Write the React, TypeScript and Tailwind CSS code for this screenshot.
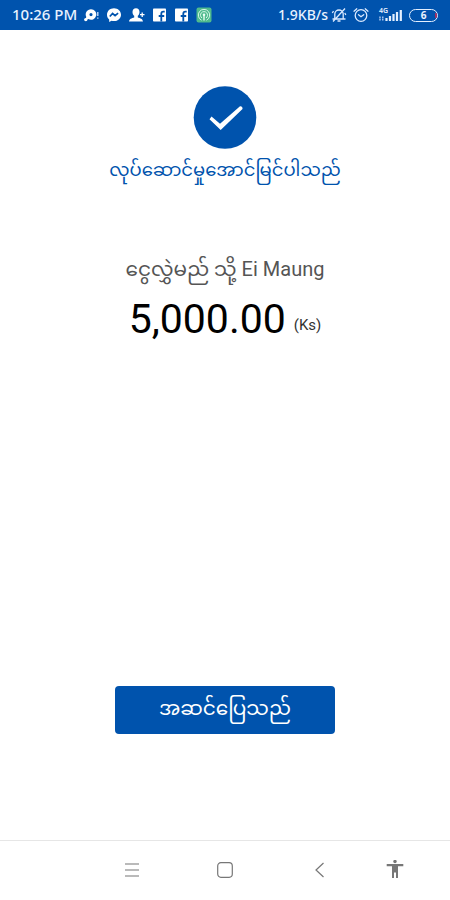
import type { ReactNode } from "react";

function StatusBar() {
  return (
    <header className="flex h-[30px] items-center justify-between bg-[#0053ad] px-3 font-['Noto_Sans',sans-serif] text-sm font-medium text-[#e8f2ff]">
      <div className="flex items-center">
        <span className="w-[71px] text-[15px] whitespace-nowrap">10:26 PM</span>
        <div className="flex items-center gap-[7px]">
          <ChatDotIcon />
          <MessengerIcon />
          <AddPersonIcon />
          <FacebookIcon />
          <FacebookIcon />
          <HotspotIcon />
        </div>
      </div>
      <div className="flex items-center">
        <span className="whitespace-nowrap">1.9KB/s</span>
        <MutedBellIcon />
        <AlarmIcon />
        <SignalIcon />
        <Battery level={6} />
      </div>
    </header>
  );
}

function ChatDotIcon() {
  return (
    <svg className="h-4 w-4" viewBox="0 0 16 16" aria-hidden="true">
      <path
        fill="#fff"
        fillRule="evenodd"
        d="M8 2.200a5.300 5.300 0 1 1-2.600 9.900l-3 .6.900-2.700A5.300 5.300 0 0 1 8 2.200ZM8 6a1.600 1.600 0 1 0 0 3.200A1.600 1.600 0 0 0 8 6Z"
      />
      <circle cx="2.800" cy="12.600" r="1.700" fill="#fff" />
      <path d="M14.800 5v4M14.800 10.400v1.400" stroke="#cfe2ff" strokeWidth="1.300" />
    </svg>
  );
}

function MessengerIcon() {
  return (
    <svg className="h-4 w-4" viewBox="0 0 16 16" aria-hidden="true">
      <path
        fill="#fff"
        d="M8 1.200c-4 0-7 2.800-7 6.500 0 2 .8 3.600 2.200 4.800v2.500l2.300-1.200c.8.200 1.600.3 2.500.3 4 0 7-2.800 7-6.400S12 1.200 8 1.200Z"
      />
      <path d="m3.800 9.500 2.800-3 2.500 2.200 3-2.500" fill="none" stroke="#0053ad" strokeWidth="1.700" />
    </svg>
  );
}

function AddPersonIcon() {
  return (
    <svg className="h-4 w-4" viewBox="0 0 16 16" aria-hidden="true">
      <path
        fill="#fff"
        d="M7 1.200c2.200 0 3.500 1.500 3.500 3.700 0 1.700-.7 3-1.700 3.900v1.600c2.500.7 5 1.500 5.200 4.200H0c.2-2.700 2.700-3.500 5.200-4.200V8.800c-1-.9-1.700-2.200-1.700-3.900 0-2.200 1.300-3.700 3.500-3.700Z"
      />
      <path d="M11 7.700h4.500M13.200 5.500V10" stroke="#fff" strokeWidth="1.300" />
    </svg>
  );
}

function FacebookIcon() {
  return (
    <svg className="h-4 w-[15px]" viewBox="0 0 15 16" aria-hidden="true">
      <rect x="1" y="1.500" width="13" height="13" rx=".8" fill="#fff" />
      <path
        d="M9.300 14.500V6.800c0-1.500.7-2.200 2-2.200h1.400M6.700 9h5.500"
        fill="none"
        stroke="#0053ad"
        strokeWidth="1.800"
      />
    </svg>
  );
}

function HotspotIcon() {
  return (
    <svg className="h-4 w-4" viewBox="0 0 16 16" aria-hidden="true">
      <rect x=".5" y=".5" width="15" height="15" rx="2" fill="#4fba8d" />
      <g fill="none" stroke="#d8f8e8">
        <path d="M5.500 13.200a5.700 5.700 0 1 1 5 0" />
        <path d="M6 11a3.500 3.500 0 1 1 4 0" />
        <path d="M8 8v5.500" strokeWidth="1.500" />
      </g>
      <circle cx="8" cy="7.700" r="1.300" fill="#e8fff4" />
    </svg>
  );
}

function MutedBellIcon() {
  return (
    <svg className="ml-[3px] h-4 w-4" viewBox="0 0 16 16" aria-hidden="true">
      <g fill="none" stroke="#dbeaff" strokeWidth="1.300">
        <path d="M3.800 11.500V7c0-2.300 1.900-4 4.200-4s4.200 1.700 4.200 4v4.500M1.500 12h13M6.500 14h3M14 1.500 2 14.500" />
        <path d="M2.500 4 1.300 6M13.800 6l1 2" />
      </g>
    </svg>
  );
}

function AlarmIcon() {
  return (
    <svg className="ml-1.5 h-4 w-4" viewBox="0 0 16 16" aria-hidden="true">
      <g fill="none" stroke="#dbeaff" strokeWidth="1.300" strokeLinecap="round">
        <circle cx="8" cy="8.500" r="5.800" />
        <path d="M1 4.200 3.800 1.800M15 4.200l-2.800-2.400M5.500 7.700 8 9.700l2.700-2" />
      </g>
    </svg>
  );
}

function SignalIcon() {
  return (
    <div className="relative ml-2.5 h-4 w-6">
      <span className="absolute top-0 left-0 text-[7px] leading-[7px] font-semibold">4G</span>
      <svg className="h-4 w-6" viewBox="0 0 24 16" aria-hidden="true">
        <path
          d="M1 9.500v4M3.800 9.500v4"
          stroke="#cfe2ff"
          strokeWidth="1.200"
          strokeDasharray="2 .6"
        />
        <path
          d="M7.500 14v-3M11 14V9M14.500 14V7M18 14V5M21.800 14V3"
          stroke="#e3efff"
          strokeWidth="2.200"
        />
      </svg>
    </div>
  );
}

function Battery({ level }: { level: number }) {
  return (
    <div className="relative ml-1.5 flex h-[13px] w-[29px] items-center justify-center overflow-hidden rounded-full border border-[#e3efff] text-[10px] leading-none font-bold">
      <span className="absolute top-[3px] right-0 h-[5px] w-0.5 bg-[#a52f62]" />
      {level}
    </div>
  );
}

function NavButton({ label, children }: { label: string; children: ReactNode }) {
  return (
    <button type="button" aria-label={label} className="flex h-10 items-center justify-center">
      <svg
        className="h-5 w-5"
        viewBox="0 0 20 20"
        fill="none"
        stroke="#777"
        strokeWidth="1.200"
        aria-hidden="true"
      >
        {children}
      </svg>
    </button>
  );
}

function NavigationBar() {
  return (
    <nav className="grid h-[60px] grid-cols-[85fr_93fr_94fr_94fr_57fr_27fr] items-center border-t border-[#e6e6e6] pb-0.5">
      <span />
      <NavButton label="Recent apps">
        <path d="M3 4h14M3 10h14M3 16h14" />
      </NavButton>
      <NavButton label="Home">
        <rect x="2.700" y="2.700" width="14.600" height="14.600" rx="3.200" />
      </NavButton>
      <NavButton label="Back">
        <path d="m14.500 3-7.500 7 7.500 7" />
      </NavButton>
      <NavButton label="Accessibility">
        <circle cx="10" cy="1.500" r="1.700" fill="#777" stroke="none" />
        <path fill="#777" stroke="none" d="M1.700 4h16.600v2.200H13V18h-2v-5.500H9V18H7V6.200H1.700Z" />
      </NavButton>
    </nav>
  );
}

export default function App() {
  return (
    <div className="flex min-h-screen flex-col bg-white font-[Roboto,'Noto_Sans_Myanmar',sans-serif]">
      <StatusBar />
      <main className="flex flex-1 flex-col items-center pt-14">
        <svg className="h-16 w-16" viewBox="0 0 64 64" aria-hidden="true">
          <circle cx="32" cy="31.500" r="31.300" fill="#0053ad" />
          <path
            fill="#fff"
            d="M16.500 33.300 18.500 30.500 27 37.700 47 20.200c1.500-.3 2.900 1.200 2.500 2.800L27.700 44Z"
          />
        </svg>
        <h1 className="mt-1 text-lg leading-8 whitespace-nowrap text-[#0053ad]">
          လုပ်ဆောင်မှုအောင်မြင်ပါသည်
        </h1>
        <p className="mt-[67px] text-xl leading-8 whitespace-nowrap text-[#555]">
          ငွေလွှဲမည် သို့ Ei Maung
        </p>
        <p className="mt-2.5 flex items-end gap-2 text-black">
          <span className="text-[41px] leading-[48px]">5,000.00</span>
          <span className="pb-1 text-[15px] leading-7 text-[#333]">(Ks)</span>
        </p>
        <button
          type="button"
          className="mt-auto mb-[106px] h-12 w-[220px] rounded bg-[#0053ad] pb-1 text-xl whitespace-nowrap text-white"
        >
          အဆင်ပြေသည်
        </button>
      </main>
      <NavigationBar />
    </div>
  );
}
